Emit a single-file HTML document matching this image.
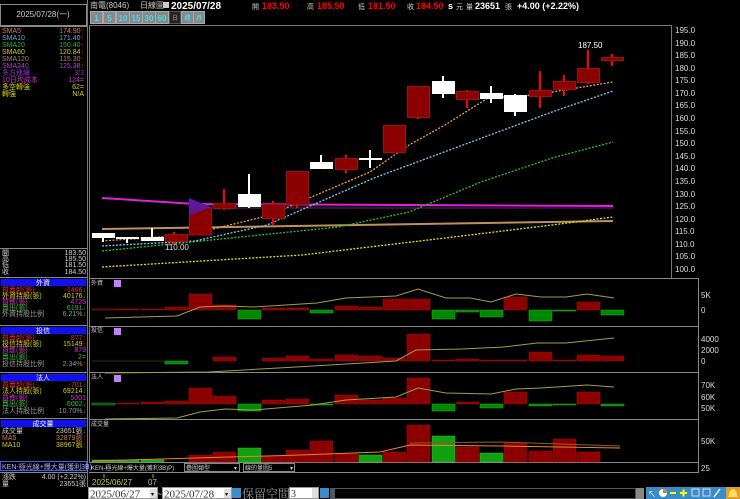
<!DOCTYPE html>
<html><head><meta charset="utf-8"><style>
html,body{margin:0;padding:0;background:#000;width:740px;height:499px;overflow:hidden}
svg{display:block}
text{font-family:"Liberation Sans","Noto Sans CJK TC",sans-serif}
.s{font-size:7px}
</style></head><body>
<svg width="740" height="499" viewBox="0 0 740 499" xmlns="http://www.w3.org/2000/svg">
<rect width="740" height="499" fill="#000"/>
<!-- left panel -->
<line x1="87.5" y1="0" x2="87.5" y2="487" stroke="#777"/>
<rect x="0.5" y="4.5" width="86" height="21" fill="none" stroke="#888"/>
<text x="43" y="17" class="s" fill="#ccc" text-anchor="middle" style="font-size:8px">2025/07/28(一)</text>
<line x1="0" y1="26.5" x2="87" y2="26.5" stroke="#888"/>
<g class="s">
<text x="2" y="33" fill="#d08040">SMA5</text><text x="84" y="33" fill="#d08040" text-anchor="end">174.90<tspan fill="#f00">↑</tspan></text>
<text x="2" y="40" fill="#60a8e0">SMA10</text><text x="84" y="40" fill="#60a8e0" text-anchor="end">171.40<tspan fill="#f00">↑</tspan></text>
<text x="2" y="47" fill="#30b030">SMA20</text><text x="84" y="47" fill="#30b030" text-anchor="end">150.40<tspan fill="#f00">↑</tspan></text>
<text x="2" y="54" fill="#d0d000">SMA60</text><text x="84" y="54" fill="#d0d000" text-anchor="end">120.84<tspan fill="#f00">↑</tspan></text>
<text x="2" y="61" fill="#a08870">SMA120</text><text x="84" y="61" fill="#a08870" text-anchor="end">115.30<tspan fill="#f00">↑</tspan></text>
<text x="2" y="68" fill="#b040c0">SMA240</text><text x="84" y="68" fill="#b040c0" text-anchor="end">125.38<tspan fill="#f00">↑</tspan></text>
<text x="2" y="75" fill="#9030d0">多方連續</text><text x="84" y="75" fill="#9030d0" text-anchor="end">3/3</text>
<text x="2" y="82" fill="#d030d0">10日均成本</text><text x="84" y="82" fill="#d030d0" text-anchor="end">124=</text>
<text x="2" y="89" fill="#d0d000">多空轉強</text><text x="84" y="89" fill="#d0d000" text-anchor="end">62=</text>
<text x="2" y="96" fill="#d0d000">轉強</text><text x="84" y="96" fill="#d0d000" text-anchor="end">N/A</text>
</g>
<line x1="0" y1="248.5" x2="87" y2="248.5" stroke="#888"/>
<g class="s" fill="#ccc">
<text x="2" y="255">開</text><text x="86" y="255" text-anchor="end">183.50</text>
<text x="2" y="261">高</text><text x="86" y="261" text-anchor="end">185.50</text>
<text x="2" y="267">低</text><text x="86" y="267" text-anchor="end">181.50</text>
<text x="2" y="274">收</text><text x="86" y="274" text-anchor="end">184.50</text>
</g>
<line x1="0" y1="277.5" x2="87" y2="277.5" stroke="#888"/>
<!-- 外資 -->
<rect x="1" y="279" width="85" height="7" fill="#1010f0"/><text x="43" y="285" class="s" fill="#fff" text-anchor="middle">外資</text>
<g class="s">
<text x="2" y="292" fill="#e03030">買賣超(張)</text><text x="86" y="292" fill="#e03030" text-anchor="end">-1466<tspan fill="#0c0">↓</tspan></text>
<text x="2" y="298" fill="#d0d000">外資持股(張)</text><text x="86" y="298" fill="#d0d000" text-anchor="end">40176<tspan fill="#0c0">↓</tspan></text>
<text x="2" y="304" fill="#d030d0">買進(張)</text><text x="86" y="304" fill="#d030d0" text-anchor="end">4725</text>
<text x="2" y="310" fill="#30c030">賣出(張)</text><text x="86" y="310" fill="#30c030" text-anchor="end">6191<tspan fill="#0c0">↓</tspan></text>
<text x="2" y="316" fill="#999">外資持股比例</text><text x="86" y="316" fill="#999" text-anchor="end">6.21%<tspan fill="#0c0">↓</tspan></text>
</g>
<line x1="0" y1="325.5" x2="87" y2="325.5" stroke="#888"/>
<rect x="1" y="327" width="85" height="7" fill="#1010f0"/><text x="43" y="333" class="s" fill="#fff" text-anchor="middle">投信</text>
<g class="s">
<text x="2" y="340" fill="#e03030">買賣超(張)</text><text x="86" y="340" fill="#e03030" text-anchor="end">877<tspan fill="#f00">↑</tspan></text>
<text x="2" y="346" fill="#d0d000">投信持股(張)</text><text x="86" y="346" fill="#d0d000" text-anchor="end">15149<tspan fill="#f00">↑</tspan></text>
<text x="2" y="352" fill="#d030d0">買進(張)</text><text x="86" y="352" fill="#d030d0" text-anchor="end">879</text>
<text x="2" y="359" fill="#30c030">賣出(張)</text><text x="86" y="359" fill="#30c030" text-anchor="end">2=</text>
<text x="2" y="366" fill="#999">投信持股比例</text><text x="86" y="366" fill="#999" text-anchor="end">2.34%<tspan fill="#f00">↑</tspan></text>
</g>
<line x1="0" y1="372.5" x2="87" y2="372.5" stroke="#888"/>
<rect x="1" y="374" width="85" height="7" fill="#1010f0"/><text x="43" y="380" class="s" fill="#fff" text-anchor="middle">法人</text>
<g class="s">
<text x="2" y="387" fill="#e03030">買賣超(張)</text><text x="86" y="387" fill="#e03030" text-anchor="end">-701<tspan fill="#0c0">↓</tspan></text>
<text x="2" y="393" fill="#d0d000">法人持股(張)</text><text x="86" y="393" fill="#d0d000" text-anchor="end">69214<tspan fill="#0c0">↓</tspan></text>
<text x="2" y="400" fill="#d030d0">買進(張)</text><text x="86" y="400" fill="#d030d0" text-anchor="end">5001</text>
<text x="2" y="406" fill="#30c030">賣出(張)</text><text x="86" y="406" fill="#30c030" text-anchor="end">6002<tspan fill="#0c0">↓</tspan></text>
<text x="2" y="413" fill="#999">法人持股比例</text><text x="86" y="413" fill="#999" text-anchor="end">10.70%<tspan fill="#0c0">↓</tspan></text>
</g>
<line x1="0" y1="418.5" x2="87" y2="418.5" stroke="#888"/>
<rect x="1" y="420" width="85" height="7" fill="#1010f0"/><text x="43" y="426" class="s" fill="#fff" text-anchor="middle">成交量</text>
<g class="s">
<text x="2" y="433" fill="#ccc">成交量</text><text x="86" y="433" fill="#ccc" text-anchor="end">23651張<tspan fill="#0c0">↓</tspan></text>
<text x="2" y="440" fill="#d08040">MA5</text><text x="86" y="440" fill="#d08040" text-anchor="end">32879張<tspan fill="#f00">↑</tspan></text>
<text x="2" y="447" fill="#d0d000">MA10</text><text x="86" y="447" fill="#d0d000" text-anchor="end">38967張<tspan fill="#f00">↑</tspan></text>
</g>
<rect x="0.5" y="461.5" width="86" height="9" fill="#000" stroke="#3060ff"/>
<text x="2" y="469" class="s" fill="#aaf">KEN-極光線+爆大量(獲利3B)</text>
<line x1="0" y1="472.5" x2="87" y2="472.5" stroke="#888"/>
<g class="s" fill="#ccc">
<text x="2" y="479">漲跌</text><text x="86" y="479" text-anchor="end">4.00 (+2.22%)</text>
<text x="2" y="486">量</text><text x="86" y="486" text-anchor="end">23651張</text>
</g>
<!-- top bar -->
<g style="font-size:8px" fill="#ccc">
<text x="90" y="8">南電(8046)</text>
<text x="140" y="8">日線圖</text>
</g>
<rect x="163" y="2" width="6" height="6" fill="#ccc"/>
<text x="171" y="9" fill="#fff" style="font-size:10px;font-weight:bold">2025/07/28</text>
<g style="font-size:9px;font-weight:bold">
<text x="252" y="9" fill="#ccc" style="font-size:7px;font-weight:normal">開</text><text x="262" y="9" fill="#f00">183.50</text>
<text x="307" y="9" fill="#ccc" style="font-size:7px;font-weight:normal">高</text><text x="317" y="9" fill="#f00">185.50</text>
<text x="358" y="9" fill="#ccc" style="font-size:7px;font-weight:normal">低</text><text x="368" y="9" fill="#f00">181.50</text>
<text x="407" y="9" fill="#ccc" style="font-size:7px;font-weight:normal">收</text><text x="416" y="9" fill="#f00">184.50</text>
<text x="448" y="9" fill="#fff">s</text><text x="456" y="9" fill="#ccc" style="font-size:7px;font-weight:normal">元</text>
<text x="466" y="9" fill="#ccc" style="font-size:7px;font-weight:normal">量</text><text x="475" y="9" fill="#fff">23651</text>
<text x="505" y="9" fill="#ccc" style="font-size:7px;font-weight:normal">張</text>
<text x="517" y="9" fill="#fff">+4.00 (+2.22%)</text>
</g>
<!-- toolbar -->
<rect x="90" y="11" width="115" height="13" fill="#7a7a7a"/>
<g style="font-size:8px;font-weight:bold" fill="#40e0f0" text-anchor="middle">
<rect x="90.5" y="11.5" width="12" height="12" fill="#888" stroke="#aaa"/><text x="96.5" y="21">1</text>
<rect x="103.5" y="11.5" width="12" height="12" fill="#888" stroke="#aaa"/><text x="109.5" y="21">5</text>
<rect x="116.5" y="11.5" width="13" height="12" fill="#888" stroke="#aaa"/><text x="123" y="21">10</text>
<rect x="129.5" y="11.5" width="13" height="12" fill="#888" stroke="#aaa"/><text x="136" y="21">15</text>
<rect x="142.5" y="11.5" width="13" height="12" fill="#888" stroke="#aaa"/><text x="149" y="21">30</text>
<rect x="155.5" y="11.5" width="13" height="12" fill="#888" stroke="#aaa"/><text x="162" y="21">60</text>
<rect x="169.5" y="11.5" width="11" height="12" fill="#222" stroke="#555"/><text x="175" y="20" fill="#777" style="font-size:6px">日</text>
<rect x="181.5" y="11.5" width="12" height="12" fill="#888" stroke="#aaa"/><text x="187.5" y="20" style="font-size:6px">週</text>
<rect x="193.5" y="11.5" width="11" height="12" fill="#888" stroke="#aaa"/><text x="199" y="20" style="font-size:6px">月</text>
</g>
<!-- main chart frame -->
<line x1="89" y1="25.5" x2="672" y2="25.5" stroke="#777"/>
<line x1="89.5" y1="25" x2="89.5" y2="462" stroke="#777"/>
<line x1="671.5" y1="25" x2="671.5" y2="278" stroke="#777"/>
<g style="font-size:8px" fill="#ddd">
<text x="675" y="33">195.0</text><text x="675" y="46">190.0</text><text x="675" y="58">185.0</text><text x="675" y="71">180.0</text>
<text x="675" y="83">175.0</text><text x="675" y="96">170.0</text><text x="675" y="108">165.0</text><text x="675" y="121">160.0</text>
<text x="675" y="134">155.0</text><text x="675" y="146">150.0</text><text x="675" y="159">145.0</text><text x="675" y="171">140.0</text>
<text x="675" y="184">135.0</text><text x="675" y="197">130.0</text><text x="675" y="209">125.0</text><text x="675" y="222">120.0</text>
<text x="675" y="234">115.0</text><text x="675" y="247">110.0</text><text x="675" y="259">105.0</text><text x="675" y="272">100.0</text>
</g>
<!-- MAs -->
<polyline points="102,198 195,204 613,206" fill="none" stroke="#e020e0" stroke-width="2"/>
<polyline points="200,208 613,208" fill="none" stroke="#702070" stroke-width="1"/>
<polyline points="102,229 613,221" fill="none" stroke="#c09060" stroke-width="2"/>
<polyline points="102,267 302,255 445,238 552,225 613,217" fill="none" stroke="#e0e020" stroke-width="1.3" stroke-dasharray="2,1.5"/>
<polyline points="102,251 231,238 338,227 409,212 481,182 552,158 613,142" fill="none" stroke="#30c030" stroke-width="1.3" stroke-dasharray="2,1.5"/>
<polyline points="102,246 195,241 267,225 374,178 463,145 552,112 613,91" fill="none" stroke="#80c8f0" stroke-width="1.3" stroke-dasharray="2,1.5"/>
<polyline points="102,241 188,235 267,216 370,172 409,145 445,125 488,98 534,95 613,82" fill="none" stroke="#f0a040" stroke-width="1.3" stroke-dasharray="2,1.5"/>
<!-- candles -->
<g stroke="#ff0000" stroke-width="2">
<line x1="174" y1="232" x2="174" y2="245"/><line x1="224" y1="189" x2="224" y2="210"/><line x1="273" y1="201" x2="273" y2="225"/>
<line x1="297" y1="204" x2="297" y2="208"/><line x1="346" y1="155" x2="346" y2="173"/><line x1="418" y1="117" x2="418" y2="119"/>
<line x1="467" y1="90" x2="467" y2="108"/><line x1="540" y1="71" x2="540" y2="108"/><line x1="564" y1="75" x2="564" y2="96"/>
<line x1="588" y1="50" x2="588" y2="84"/><line x1="612" y1="54" x2="612" y2="66"/>
</g>
<g stroke="#fff" stroke-width="2">
<line x1="103" y1="233" x2="103" y2="242"/><line x1="127" y1="237" x2="127" y2="243"/><line x1="152" y1="228" x2="152" y2="241"/>
<line x1="249" y1="174" x2="249" y2="208"/><line x1="321" y1="155" x2="321" y2="169"/><line x1="370" y1="150" x2="370" y2="168"/>
<line x1="443" y1="76" x2="443" y2="98"/><line x1="491" y1="86" x2="491" y2="103"/><line x1="515" y1="94" x2="515" y2="116"/>
</g>
<g fill="#fff">
<rect x="92" y="233" width="23" height="5"/><rect x="116" y="237" width="23" height="2"/><rect x="141" y="237" width="23" height="4"/>
<rect x="238" y="194" width="23" height="13"/><rect x="310" y="162" width="23" height="7"/><rect x="359" y="158" width="23" height="2"/>
<rect x="432" y="81" width="23" height="13"/><rect x="480" y="93" width="23" height="6"/><rect x="504" y="95" width="23" height="17"/>
</g>
<polygon points="189,198 213,208 189,220" fill="#5a1aa0"/>
<g fill="#8b0000" stroke="#a01010" stroke-width="1">
<rect x="165.5" y="234.5" width="22" height="7"/><rect x="189.5" y="208" width="22" height="27"/><rect x="213.5" y="203.5" width="22" height="5"/>
<rect x="262.5" y="204.5" width="22" height="14"/><rect x="286.5" y="171.5" width="22" height="33"/><rect x="335.5" y="158.5" width="22" height="11"/>
<rect x="383.5" y="125.5" width="22" height="27"/><rect x="407.5" y="86.5" width="22" height="31"/><rect x="456.5" y="91.5" width="22" height="8"/>
<rect x="529.5" y="90.5" width="22" height="6"/><rect x="553.5" y="81.5" width="22" height="8"/><rect x="577.5" y="68.5" width="22" height="14"/>
<rect x="601.5" y="57.5" width="22" height="3"/>
</g>
<polygon points="189,198 211,207 189,216" fill="#5a1aa0" opacity="0.85"/>
<text x="578" y="48" style="font-size:8px" fill="#fff">187.50</text>
<text x="165" y="250" style="font-size:8px" fill="#ddd">110.00</text>
<!-- sub panels frames -->
<g stroke="#888">
<line x1="89" y1="278.5" x2="699" y2="278.5"/><line x1="89" y1="326.5" x2="699" y2="326.5"/>
<line x1="89" y1="372.5" x2="699" y2="372.5"/><line x1="89" y1="419.5" x2="699" y2="419.5"/>
<line x1="89" y1="462.5" x2="699" y2="462.5"/><line x1="89" y1="472.5" x2="699" y2="472.5"/>
<line x1="698.5" y1="278" x2="698.5" y2="473"/>
</g>
<g style="font-size:6px" fill="#ccc"><text x="91" y="285">外資</text><text x="91" y="332">投信</text><text x="91" y="379">法人</text><text x="91" y="426">成交量</text></g>
<g fill="#c080ff"><rect x="114" y="280" width="7" height="7"/><rect x="114" y="328" width="7" height="7"/><rect x="114" y="375" width="7" height="7"/></g>
<g style="font-size:8px" fill="#ddd">
<text x="701" y="298">5K</text><text x="701" y="313">0</text>
<text x="701" y="342">4000</text><text x="701" y="353">2000</text><text x="701" y="364">0</text>
<text x="701" y="388">70K</text><text x="701" y="400">60K</text><text x="701" y="411">50K</text>
<text x="701" y="444">50K</text><text x="701" y="471">25</text>
</g>
<!-- 外資 bars -->
<g fill="#8b0000" stroke="#a01010" stroke-width="0.5">
<rect x="92" y="309" width="23" height="1" fill="#400"/><rect x="116" y="309" width="23" height="1"/><rect x="141" y="309" width="23" height="1"/>
<rect x="165" y="307" width="23" height="3"/><rect x="189" y="294" width="23" height="16"/><rect x="213" y="305" width="23" height="5"/>
<rect x="262" y="308" width="23" height="2"/><rect x="286" y="308" width="23" height="2"/><rect x="335" y="306" width="23" height="4"/>
<rect x="359" y="307" width="23" height="3"/><rect x="383" y="299" width="23" height="11"/><rect x="407" y="299" width="23" height="11"/>
<rect x="504" y="297" width="23" height="13"/><rect x="577" y="302" width="23" height="8"/>
</g>
<g fill="#008800" stroke="#20b020" stroke-width="0.5">
<rect x="238" y="310" width="23" height="9"/><rect x="310" y="310" width="23" height="3"/><rect x="432" y="310" width="23" height="9"/>
<rect x="456" y="310" width="23" height="2"/><rect x="480" y="310" width="23" height="7"/><rect x="529" y="310" width="23" height="11"/>
<rect x="553" y="310" width="23" height="1"/><rect x="601" y="310" width="23" height="5"/>
</g>
<polyline points="105,318 177,316 200,307 225,306 254,307 317,303 346,298 396,296 418,289 446,298 470,298 491,302 516,294 541,297 566,297 587,294 614,298" fill="none" stroke="#a0a040" stroke-width="1"/>
<!-- 投信 bars -->
<g fill="#8b0000" stroke="#a01010" stroke-width="0.5">
<rect x="213" y="357" width="23" height="4"/><rect x="262" y="358" width="23" height="3"/><rect x="286" y="356" width="23" height="5"/>
<rect x="310" y="359" width="23" height="2"/><rect x="335" y="355" width="23" height="6"/><rect x="359" y="356" width="23" height="5"/>
<rect x="383" y="358" width="23" height="3"/><rect x="407" y="334" width="23" height="27"/><rect x="432" y="360" width="23" height="1"/>
<rect x="456" y="359" width="23" height="2"/><rect x="480" y="360" width="23" height="1"/><rect x="504" y="360" width="23" height="1"/>
<rect x="529" y="352" width="23" height="9"/><rect x="553" y="360" width="23" height="1"/><rect x="577" y="355" width="23" height="6"/>
<rect x="601" y="356" width="23" height="5"/>
</g>
<rect x="165" y="361" width="23" height="3" fill="#008800" stroke="#20b020" stroke-width="0.5"/>
<line x1="92" y1="361" x2="165" y2="361" stroke="#104010"/>
<polyline points="105,373 209,372 296,367 396,361 416,350 462,349 504,347 537,343 566,343 614,338" fill="none" stroke="#a0a040" stroke-width="1"/>
<!-- 法人 bars -->
<g fill="#8b0000" stroke="#a01010" stroke-width="0.5">
<rect x="116" y="403" width="23" height="1"/><rect x="141" y="402" width="23" height="2"/><rect x="165" y="401" width="23" height="3"/>
<rect x="189" y="388" width="23" height="16"/><rect x="213" y="396" width="23" height="8"/><rect x="262" y="400" width="23" height="4"/>
<rect x="286" y="399" width="23" height="5"/><rect x="335" y="395" width="23" height="9"/><rect x="359" y="400" width="23" height="4"/>
<rect x="383" y="398" width="23" height="6"/><rect x="407" y="378" width="23" height="26"/><rect x="456" y="402" width="23" height="2"/>
<rect x="504" y="392" width="23" height="12"/><rect x="577" y="392" width="23" height="12"/>
</g>
<g fill="#008800" stroke="#20b020" stroke-width="0.5">
<rect x="92" y="403" width="23" height="2" fill="#104010"/><rect x="238" y="404" width="23" height="7"/><rect x="310" y="404" width="23" height="1"/>
<rect x="432" y="404" width="23" height="7"/><rect x="480" y="404" width="23" height="4"/><rect x="529" y="404" width="23" height="2"/>
<rect x="553" y="404" width="23" height="1"/><rect x="601" y="404" width="23" height="2"/>
</g>
<polyline points="105,419 177,418 200,412 225,409 254,410 313,405 346,400 396,397 418,388 446,393 491,394 516,389 541,388 587,385 614,387" fill="none" stroke="#a0a040" stroke-width="1"/>
<!-- volume bars -->
<g fill="#8b0000" stroke="#a01010" stroke-width="0.5">
<rect x="189" y="455" width="23" height="7"/><rect x="213" y="452" width="23" height="10"/><rect x="262" y="456" width="23" height="6"/>
<rect x="286" y="450" width="23" height="12"/><rect x="310" y="441" width="23" height="21"/><rect x="335" y="454" width="23" height="8"/>
<rect x="383" y="452" width="23" height="10"/><rect x="407" y="425" width="23" height="37"/><rect x="456" y="447" width="23" height="15"/>
<rect x="504" y="443" width="23" height="19"/><rect x="529" y="451" width="23" height="11"/><rect x="553" y="439" width="23" height="23"/>
<rect x="577" y="452" width="23" height="10"/>
</g>
<g fill="#10a010" stroke="#30c030" stroke-width="0.5">
<rect x="92" y="460" width="23" height="2"/><rect x="116" y="460" width="23" height="2"/><rect x="141" y="460" width="23" height="2"/>
<rect x="238" y="448" width="23" height="14"/><rect x="359" y="455" width="23" height="7"/><rect x="432" y="436" width="23" height="26"/>
<rect x="480" y="453" width="23" height="9"/><rect x="504" y="454" width="23" height="8" fill="none" stroke="none"/>
</g>
<polyline points="92,461 300,455 380,452 410,445 500,446 560,447 620,448" fill="none" stroke="#f08030" stroke-width="1"/>
<polyline points="410,443 500,442 560,444 620,446" fill="none" stroke="#806030" stroke-width="1"/>
<!-- dropdown row -->
<g style="font-size:6px" fill="#ccc">
<text x="91" y="470">KEN-極光線+爆大量(獲利3B)P)</text>
<rect x="184.5" y="463.5" width="55" height="8" fill="none" stroke="#888"/><text x="186" y="470">疊圖類型</text><text x="234" y="470">▾</text>
<rect x="243.5" y="463.5" width="51" height="8" fill="none" stroke="#888"/><text x="245" y="470">線的量圖5</text><text x="290" y="470">▾</text>
</g>
<line x1="104" y1="474" x2="104" y2="478" stroke="#aa4"/><line x1="153" y1="474" x2="153" y2="478" stroke="#aa4"/>
<g style="font-size:8px" fill="#c8c850"><text x="92" y="485">2025/06/27</text><text x="148" y="485">07</text></g>
<!-- bottom bar -->
<rect x="88" y="487" width="652" height="12" fill="#000"/>
<rect x="88.5" y="487.5" width="69" height="11" fill="#fff" stroke="#999"/>
<text x="90" y="497.5" style="font-size:11px;font-family:'Liberation Serif',serif" fill="#333">2025/06/27</text>
<rect x="150" y="489" width="7" height="9" fill="#ddd"/><text x="151" y="496" style="font-size:6px" fill="#000">▾</text>
<text x="157" y="497" style="font-size:9px" fill="#ccc">~</text>
<rect x="162.5" y="487.5" width="69" height="11" fill="#fff" stroke="#999"/>
<text x="164" y="497.5" style="font-size:11px;font-family:'Liberation Serif',serif" fill="#333">2025/07/28</text>
<rect x="224" y="489" width="7" height="9" fill="#ddd"/><text x="225" y="496" style="font-size:6px" fill="#000">▾</text>
<rect x="232" y="488" width="9" height="10" fill="#3a8cd0"/>
<text x="242" y="498" style="font-size:12px;font-family:'Noto Serif CJK SC',serif" fill="#999">保留空間</text>
<rect x="289.5" y="487.5" width="29" height="11" fill="#fff" stroke="#999"/>
<text x="291" y="497" style="font-size:10px;font-family:'Liberation Serif',serif" fill="#333">3</text>
<rect x="312" y="488" width="6" height="10" fill="#ddd"/>
<rect x="320" y="488" width="9" height="10" fill="#3a8cd0"/>
<rect x="330" y="488" width="314" height="11" fill="#555"/>
<rect x="335" y="489" width="300" height="9" fill="#000"/>
<rect x="636" y="488" width="8" height="11" fill="#888"/>
<rect x="646" y="487" width="94" height="12" fill="#3a8cc8"/>
<g fill="#fff" style="font-size:8px">
<text x="648" y="497">↖</text><circle cx="663" cy="493" r="4" fill="#fff"/><path d="M663 493 L663 489 A4 4 0 0 1 667 493Z" fill="#e08020"/>
<rect x="670" y="492" width="6" height="2" fill="#ff0"/><rect x="680" y="492" width="7" height="2" fill="#ff0"/><rect x="682.5" y="489.5" width="2" height="7" fill="#ff0"/>
<rect x="692" y="489" width="7" height="7" fill="none" stroke="#dde" stroke-width="1"/>
<rect x="703" y="489" width="7" height="7" fill="none" stroke="#dde" stroke-width="1"/>
<line x1="714" y1="497" x2="720" y2="489" stroke="#eef" stroke-width="1.5"/>
</g>
<rect x="726" y="487" width="14" height="12" fill="#e0a030"/>
<path d="M733 489 Q729 490 729 495 L728 497 L738 497 L737 495 Q737 490 733 489Z" fill="#ffe060"/>
</svg>
</body></html>
